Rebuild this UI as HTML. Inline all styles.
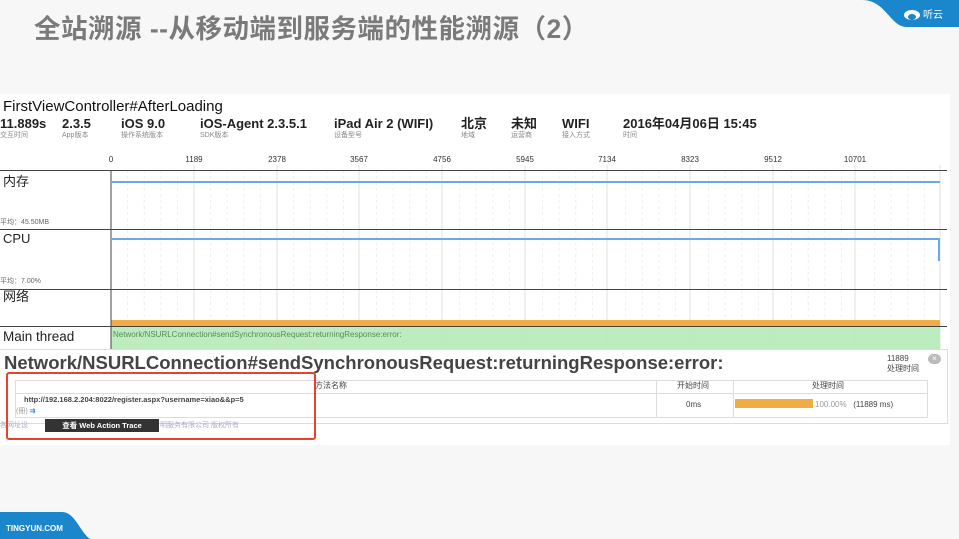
<!DOCTYPE html>
<html><head><meta charset="utf-8"><style>
body{margin:0;width:959px;height:539px;overflow:hidden;background:#f7f7f7;position:relative;font-family:"Liberation Sans","Noto Sans CJK SC",sans-serif}
.a{position:absolute;white-space:nowrap;line-height:1.15}
.t{font-size:26.5px;font-weight:bold;color:#7a7a7a;left:34px;top:14px;letter-spacing:0.5px}
.v{font-size:13px;color:#222;top:116px;font-weight:bold;line-height:15px;height:15px}
.l{font-size:7px;color:#888;top:132px;line-height:8px}
.ax{font-size:8px;color:#333;top:155px;transform:translateX(-50%)}
.rl{font-size:13px;color:#222;left:3px}
.avg{font-size:7px;color:#666;left:0}
</style></head><body>
<div class="a t">全站溯源 --从移动端到服务端的性能溯源（2）</div>
<svg class="a" style="left:862px;top:0" width="97" height="27"><path d="M0 0 H97 V27 H45 C28 27 24 0 0 0Z" fill="#1a87cc"/><ellipse cx="50" cy="15" rx="8" ry="5" fill="#fff"/><ellipse cx="50" cy="17" rx="4" ry="3" fill="#1a87cc"/><text x="61" y="18" font-size="10" fill="#fff" font-family="Noto Sans CJK SC">听云</text></svg>
<svg class="a" style="left:0;top:512px" width="90" height="27"><path d="M0 0 H62 C75 0 80 20 90 27 H0Z" fill="#1a87cc"/><text x="6" y="19" font-size="8" fill="#fff" font-weight="bold" font-family="Liberation Sans">TINGYUN.COM</text></svg>
<div class="a" style="left:0;top:94px;width:950px;height:351px;background:#fff"></div>
<div class="a" style="left:3px;top:98px;font-size:15px;color:#111">FirstViewController#AfterLoading</div>
<div class="a v" style="left:0">11.889s</div><div class="a l" style="left:0">交互时间</div>
<div class="a v" style="left:62px">2.3.5</div><div class="a l" style="left:62px">App版本</div>
<div class="a v" style="left:121px">iOS 9.0</div><div class="a l" style="left:121px">操作系统版本</div>
<div class="a v" style="left:200px">iOS-Agent 2.3.5.1</div><div class="a l" style="left:200px">SDK版本</div>
<div class="a v" style="left:334px">iPad Air 2 (WIFI)</div><div class="a l" style="left:334px">设备型号</div>
<div class="a v" style="left:461px">北京</div><div class="a l" style="left:461px">地域</div>
<div class="a v" style="left:511px">未知</div><div class="a l" style="left:511px">运营商</div>
<div class="a v" style="left:562px">WIFI</div><div class="a l" style="left:562px">接入方式</div>
<div class="a v" style="left:623px">2016年04月06日 15:45</div><div class="a l" style="left:623px">时间</div>
<div class="a ax" style="left:111px">0</div><div class="a ax" style="left:194px">1189</div><div class="a ax" style="left:277px">2378</div><div class="a ax" style="left:359px">3567</div><div class="a ax" style="left:442px">4756</div><div class="a ax" style="left:525px">5945</div><div class="a ax" style="left:607px">7134</div><div class="a ax" style="left:690px">8323</div><div class="a ax" style="left:773px">9512</div><div class="a ax" style="left:855px">10701</div>
<svg class="a" style="left:0;top:165px" width="959" height="190">
<g stroke="#eeeeee" stroke-dasharray="3,3">
<path d="M127.6 5V185M144.2 5V185M160.8 5V185M177.4 5V185M210.6 5V185M227.2 5V185M243.8 5V185M260.4 5V185M293.6 5V185M310.2 5V185M326.8 5V185M343.4 5V185M376.6 5V185M393.2 5V185M409.8 5V185M426.4 5V185M459.6 5V185M476.2 5V185M492.8 5V185M509.4 5V185M542.6 5V185M559.2 5V185M575.8 5V185M592.4 5V185M625.6 5V185M642.2 5V185M658.8 5V185M675.4 5V185M708.6 5V185M725.2 5V185M741.8 5V185M758.4 5V185M791.6 5V185M808.2 5V185M824.8 5V185M841.4 5V185M874.6 5V185M891.2 5V185M907.8 5V185M924.4 5V185"/></g>
<g stroke="#e2e2e2"><path d="M194 0V185M277 0V185M359 0V185M442 0V185M525 0V185M607 0V185M690 0V185M773 0V185M855 0V185M940 0V185"/></g>
<rect x="111" y="155" width="829" height="6" fill="#f0ac45"/>
<rect x="111" y="162" width="829" height="23" fill="#b9ebbb" opacity="0.95"/>
<g stroke="#444" stroke-width="1"><path d="M111 5V185M0 5.5H947M0 64.5H947M0 124.5H947M0 161.5H947"/></g>
<g stroke="#6aa8e8" stroke-width="2" fill="none"><path d="M111 17H940"/><path d="M111 74H939V96"/></g>
<text x="113" y="172" font-size="8" fill="#5a8a5a" font-family="Liberation Sans">Network/NSURLConnection#sendSynchronousRequest:returningResponse:error:</text>
</svg>
<div class="a rl" style="top:175px">内存</div><div class="a avg" style="top:219px">平均：45.50MB</div>
<div class="a rl" style="top:232px">CPU</div><div class="a avg" style="top:278px">平均：7.00%</div>
<div class="a rl" style="top:290px">网络</div>
<div class="a rl" style="top:329px;font-size:13.5px">Main thread</div>
<div class="a" style="left:0;top:349px;width:948px;height:75px;background:rgba(255,255,255,0.93);border:1px solid #ddd;border-left:0;box-sizing:border-box"></div>
<div class="a" style="left:4px;top:352px;font-size:18.5px;font-weight:bold;color:#444">Network/NSURLConnection#sendSynchronousRequest:returningResponse:error:</div>
<div class="a" style="left:887px;top:354px;font-size:8px;color:#444;line-height:10px">11889<br>处理时间</div>
<div class="a" style="left:928px;top:354px;width:13px;height:10px;border-radius:6px;background:#bbb;color:#fff;font-size:8px;text-align:center;line-height:10px">×</div>
<div class="a" style="left:15px;top:380px;width:913px;height:38px;border:1px solid #ddd;box-sizing:border-box"></div>
<div class="a" style="left:15px;top:393px;width:913px;height:1px;background:#ddd"></div>
<div class="a" style="left:656px;top:380px;width:1px;height:38px;background:#ddd"></div>
<div class="a" style="left:733px;top:380px;width:1px;height:38px;background:#ddd"></div>
<div class="a" style="left:315px;top:381px;font-size:8px;color:#444">方法名称</div>
<div class="a" style="left:677px;top:381px;font-size:8px;color:#444">开始时间</div>
<div class="a" style="left:812px;top:381px;font-size:8px;color:#444">处理时间</div>
<div class="a" style="left:686px;top:400px;font-size:8px;color:#444">0ms</div>
<div class="a" style="left:735px;top:399px;width:78px;height:9px;background:#f0ac45"></div>
<div class="a" style="left:815px;top:400px;font-size:8px;color:#999">100.00% <span style="color:#444">&nbsp;&nbsp;(11889 ms)</span></div>
<div class="a" style="left:24px;top:396px;font-size:7.5px;font-weight:bold;color:#444">http://192.168.2.204:8022/register.aspx?username=xiao&amp;&amp;p=5</div>
<div class="a" style="left:16px;top:408px;font-size:7px;color:#999">(冊) <span style="color:#3a8ee6;font-weight:bold">⇉</span></div>
<div class="a" style="left:45px;top:419px;width:114px;height:13px;background:#333;color:#fff;font-size:7.5px;font-weight:bold;line-height:13px;text-align:center">查看 Web Action Trace</div>
<div class="a" style="left:0;top:422px;font-size:7px;color:#aac">各网址设</div>
<div class="a" style="left:160px;top:422px;font-size:7px;color:#aac">明服务有限公司 版权所有</div>
<div class="a" style="left:6px;top:372px;width:310px;height:68px;border:2px solid #e8412c;border-radius:3px;box-sizing:border-box"></div>
</body></html>
